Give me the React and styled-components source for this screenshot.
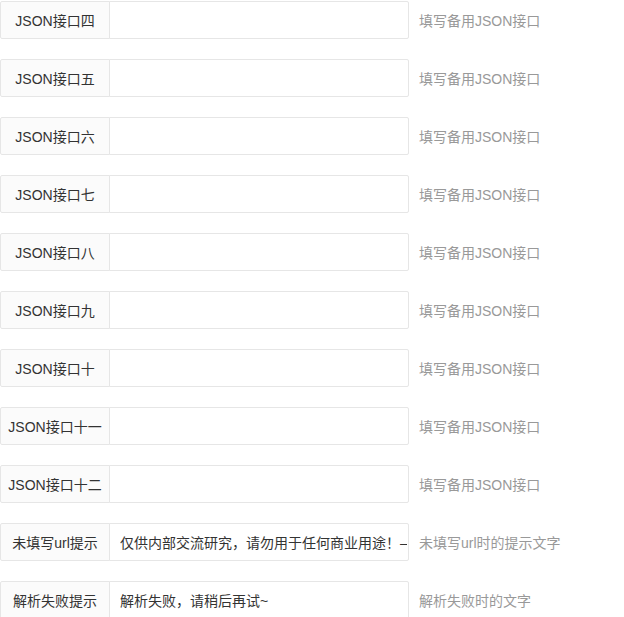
import React from "react";
import styled, { createGlobalStyle } from "styled-components";

const Global = createGlobalStyle`
  html, body { margin: 0; padding: 0; background: #fff; }
  body {
    font-family: "Liberation Sans", Arial, "Noto Sans CJK SC", sans-serif;
    font-size: 14px;
    color: #333;
  }
`;

const Form = styled.div`
  display: flex;
  flex-direction: column;
  gap: 20px;
  padding-top: 1px;
`;

const Row = styled.div`
  display: flex;
  align-items: center;
  height: 38px;
`;

const Label = styled.label`
  box-sizing: border-box;
  width: 110px;
  height: 38px;
  flex: none;
  display: flex;
  align-items: center;
  justify-content: center;
  padding-bottom: 1px;
  white-space: nowrap;
  border: 1px solid #e6e6e6;
  border-radius: 2px 0 0 2px;
  background: #fbfbfb;
  color: #333;
  font-size: 14px;
  overflow: hidden;
`;

const Input = styled.input`
  box-sizing: border-box;
  width: 300px;
  height: 38px;
  margin-left: -1px;
  flex: none;
  border: 1px solid #e6e6e6;
  border-radius: 0 2px 2px 0;
  background: #fff;
  padding: 0 1px 1px 10px;
  font-family: "Liberation Sans", Arial, "Noto Sans CJK SC", sans-serif;
  font-size: 14px;
  color: #333;
  outline: none;
`;

const Hint = styled.div`
  margin-left: 10px;
  padding-bottom: 1px;
  color: #999;
  font-size: 14px;
  white-space: nowrap;
`;

const rows = [
  { label: "JSON接口四", value: "", hint: "填写备用JSON接口" },
  { label: "JSON接口五", value: "", hint: "填写备用JSON接口" },
  { label: "JSON接口六", value: "", hint: "填写备用JSON接口" },
  { label: "JSON接口七", value: "", hint: "填写备用JSON接口" },
  { label: "JSON接口八", value: "", hint: "填写备用JSON接口" },
  { label: "JSON接口九", value: "", hint: "填写备用JSON接口" },
  { label: "JSON接口十", value: "", hint: "填写备用JSON接口" },
  { label: "JSON接口十一", value: "", hint: "填写备用JSON接口" },
  { label: "JSON接口十二", value: "", hint: "填写备用JSON接口" },
  {
    label: "未填写url提示",
    value: "仅供内部交流研究，请勿用于任何商业用途！–如有侵权请联系删除",
    hint: "未填写url时的提示文字",
  },
  { label: "解析失败提示", value: "解析失败，请稍后再试~", hint: "解析失败时的文字" },
];

export default function App() {
  return (
    <>
      <Global />
      <Form>
        {rows.map((r) => (
          <Row key={r.label}>
            <Label>{r.label}</Label>
            <Input type="text" defaultValue={r.value} readOnly />
            <Hint>{r.hint}</Hint>
          </Row>
        ))}
      </Form>
    </>
  );
}
